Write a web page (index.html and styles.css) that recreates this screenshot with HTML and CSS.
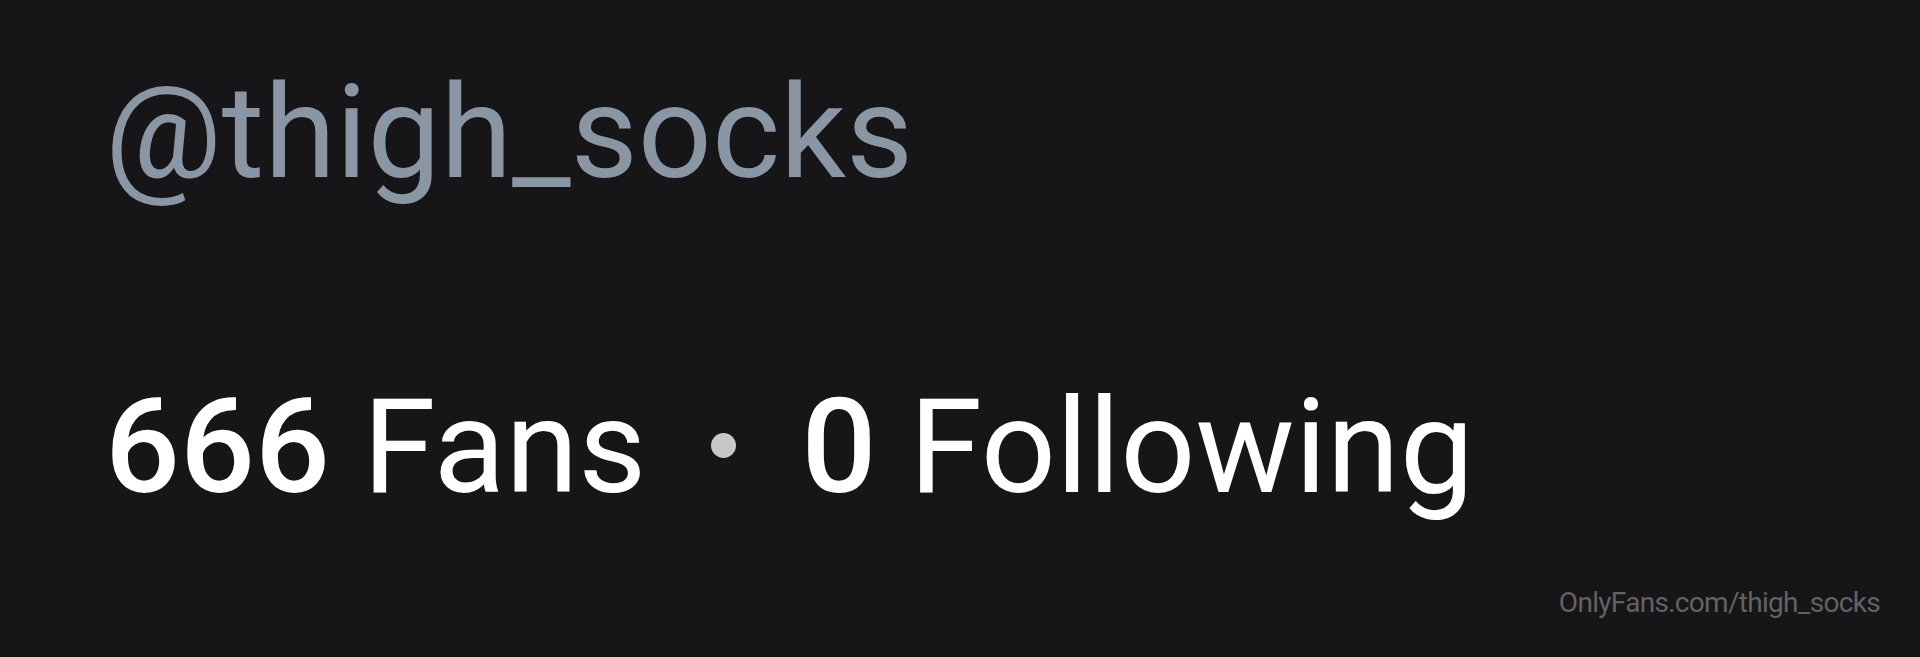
FILE: index.html
```html
<!DOCTYPE html>
<html lang="en">

<head>
    <meta charset="UTF-8">
    <meta name="viewport" content="width=device-width, initial-scale=1.0">
    <title>@thigh_socks</title>
    <link rel="stylesheet" href="styles.css">
</head>

<body>
    <div class="profile">
        <p class="handle">@thigh_socks</p>
        <p class="stats"><span class="num">666</span> Fans<span class="dot"></span><span class="num">0</span> Following</p>
        <p class="mark">OnlyFans.com/thigh_socks</p>
    </div>
</body>

</html>
```

FILE: styles.css
```css
* {
    margin: 0;
    padding: 0;
}

html,
body {
    height: 100%;
    background: #161618;
}

body {
    font-family: Roboto, "Liberation Sans", sans-serif;
    overflow: hidden;
}

.profile {
    display: flex;
    flex-direction: column;
    height: 100%;
    padding: 68px 40px 0 105px;
    box-sizing: border-box;
}

.handle {
    font-size: 130px;
    line-height: 1;
    color: #8a96a3;
}

/* 666 Fans · 0 Following */
.stats {
    margin-top: 183px;
    font-size: 132px;
    line-height: 1;
    color: #fff;
    white-space: nowrap;
}

.num {
    font-weight: 500;
}

.dot {
    display: inline-block;
    width: 25px;
    height: 25px;
    border-radius: 50%;
    background: #c8c8c8;
    vertical-align: 34px;
    margin: 0 65px 0 65px;
}

.mark {
    align-self: flex-end;
    margin-top: 76px;
    font-size: 28px;
    line-height: 1;
    color: #626262;
    letter-spacing: -0.7px;
}
```
